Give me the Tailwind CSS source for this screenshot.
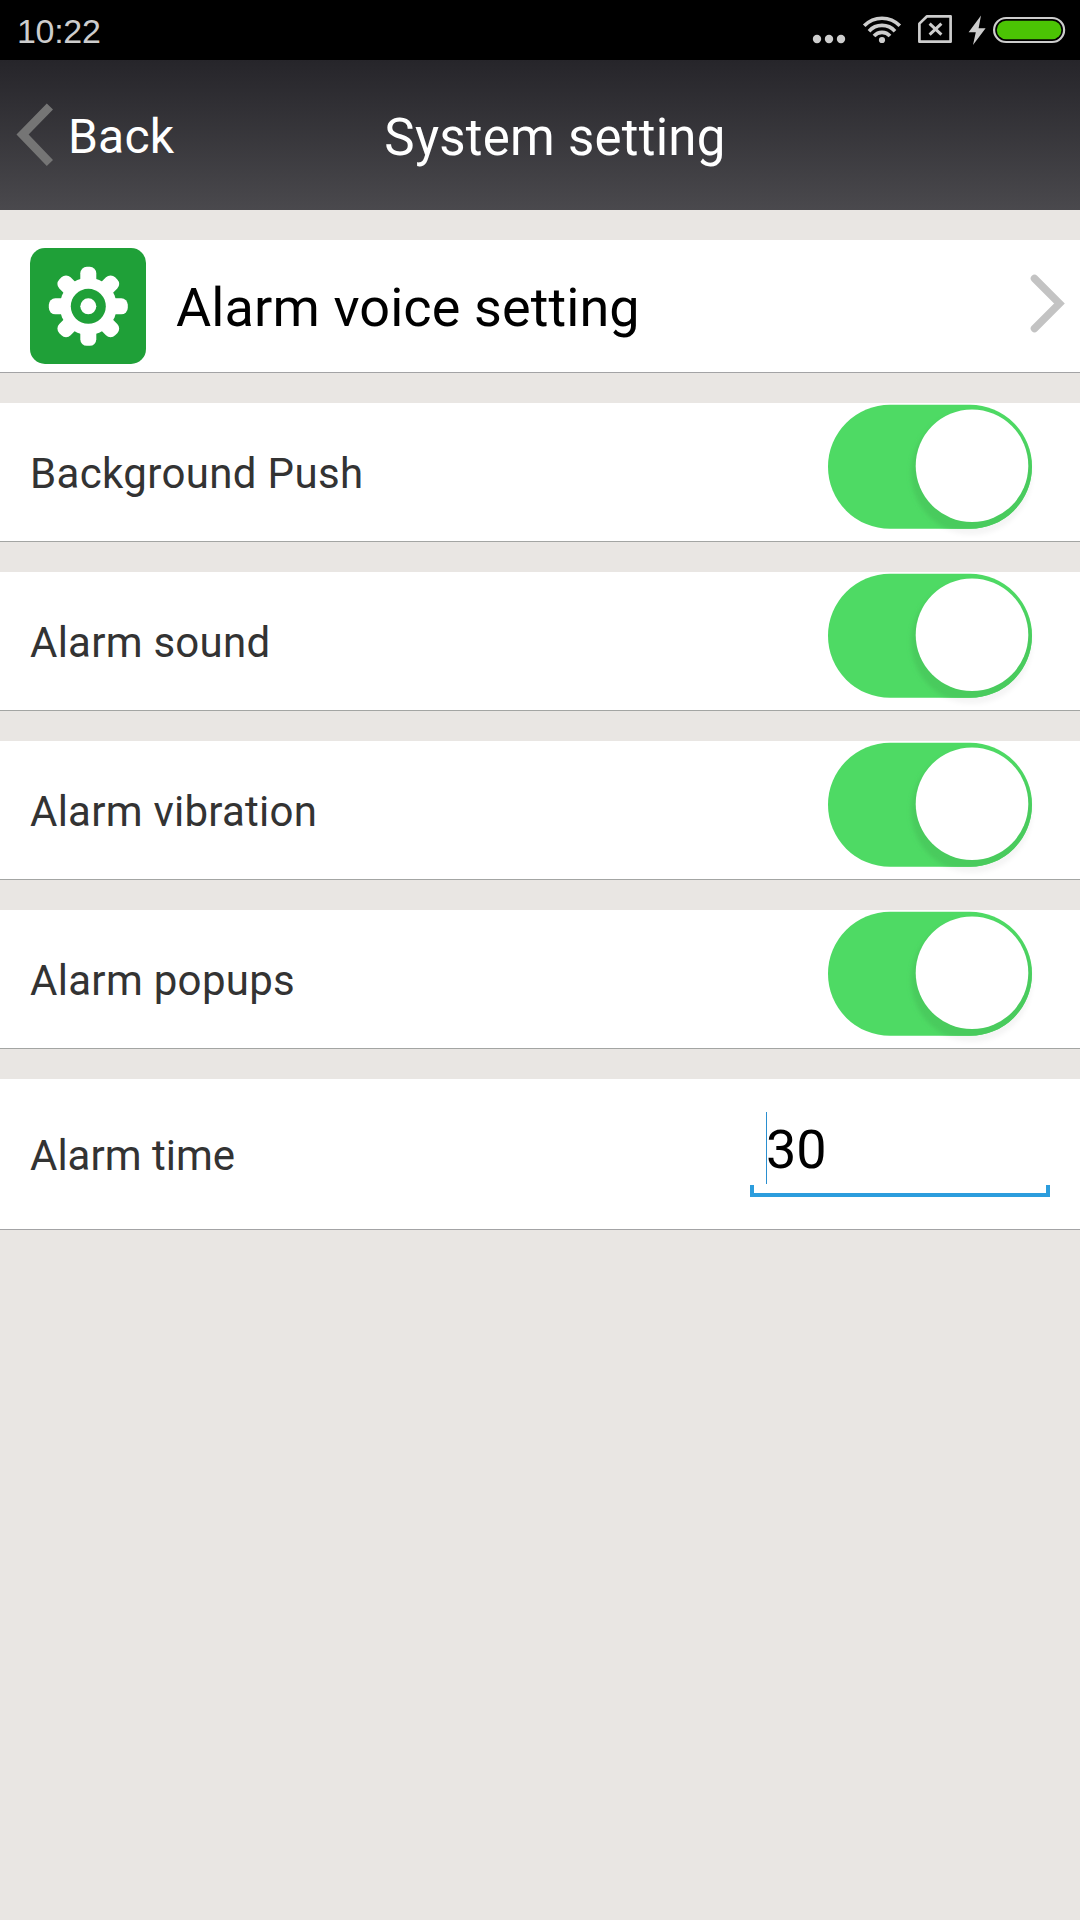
<!DOCTYPE html>
<html lang="en">
<head>
  <meta charset="UTF-8">
  <meta name="viewport" content="width=device-width, initial-scale=1.0">
  <title>System setting</title>
  <script src="https://cdn.jsdelivr.net/npm/@tailwindcss/browser@4"></script>
</head>
<body class="bg-[#e9e6e3] min-h-screen font-[Roboto,sans-serif] overflow-hidden">
  <!-- Status bar -->
  <div class="h-[60px] bg-black flex items-center justify-between pl-[17px] text-[#cdcdcd]">
    <span class="font-['Liberation_Sans',sans-serif] text-[34px] leading-none pt-px tracking-[-0.3px]">10:22</span>
    <div class="flex h-[60px]">
      <svg class="w-[36px] h-[60px]" viewBox="811 0 36 60" fill="currentColor">
        <circle cx="817" cy="39" r="4.2"/>
        <circle cx="829" cy="39" r="4.2"/>
        <circle cx="841" cy="39" r="4.2"/>
      </svg>
      <svg class="w-[70px] h-[60px]" viewBox="847 0 70 60" fill="none" stroke="currentColor" stroke-width="3.6">
        <path d="M864.2 25.8a24.6 24.6 0 0 1 35.6 0"/>
        <path d="M869 31.2a17.5 17.5 0 0 1 26 0"/>
        <path d="M874 36a10.6 10.6 0 0 1 16 0"/>
        <circle cx="882" cy="40" r="3.1" fill="currentColor" stroke="none"/>
      </svg>
      <svg class="w-[50px] h-[60px]" viewBox="917 0 50 60" fill="none" stroke="currentColor" stroke-width="2.7" stroke-linejoin="round">
        <path d="M927 16.3H950.6V41.7H919.4V23.6Z"/>
        <path d="M929.6 23.6L941.4 34.6M941.4 23.6L929.6 34.6" stroke-width="3"/>
      </svg>
      <svg class="w-[22px] h-[60px]" viewBox="967 0 22 60" fill="currentColor">
        <path d="M981 15.5L968.6 32.2H975.8L973 45L985.6 28.2H978.6Z"/>
      </svg>
      <svg class="w-[91px] h-[60px]" viewBox="989 0 91 60">
        <rect x="994.1" y="18" width="70" height="24" rx="12" fill="none" stroke="currentColor" stroke-width="2.2"/>
        <rect x="996.8" y="20.8" width="64.6" height="18.4" rx="9.2" fill="#4bc404"/>
      </svg>
    </div>
  </div>

  <!-- Header -->
  <header class="h-[150px] bg-linear-to-b from-[#26252a] to-[#4a494d] grid grid-cols-[1fr_auto_1fr] items-center text-white">
    <div class="flex items-center pl-4 gap-[14px]">
      <svg class="w-[38px] h-[64px]" viewBox="0 0 38 64" fill="#757575">
        <path d="M.5 31.5L30.8 .5L37 6.4L12.6 31.5L37 57L30.8 63Z"/>
      </svg>
      <span class="text-[48px] tracking-[0.2px] pt-1">Back</span>
    </div>
    <h1 class="text-[51px] tracking-[0.25px] pt-[6px] pl-[30px]">System setting</h1>
  </header>

  <main class="pt-[30px] flex flex-col gap-[30px] text-[42px] text-[#333]">
    <!-- Alarm voice -->
    <div class="h-[133px] bg-white border-b border-[#a3a3a5] flex items-center pl-[30px] pr-[14px] text-black">
      <svg class="w-[116px] h-[116px]" viewBox="0 0 116 116">
        <rect width="116" height="116" rx="15" fill="#1fa038"/>
        <g fill="#fff" transform="translate(58.3 58.3)">
          <circle r="28.5"/>
          <rect x="-8" y="-39.5" width="16" height="79" rx="6.5"/>
          <rect x="-8" y="-39.5" width="16" height="79" rx="6.5" transform="rotate(45)"/>
          <rect x="-8" y="-39.5" width="16" height="79" rx="6.5" transform="rotate(90)"/>
          <rect x="-8" y="-39.5" width="16" height="79" rx="6.5" transform="rotate(135)"/>
          <circle r="17.5" fill="#1fa038"/>
          <circle r="8"/>
        </g>
      </svg>
      <span class="text-[54px] tracking-[0.1px] pl-[30px] pt-[3px] flex-1">Alarm voice setting</span>
      <svg class="w-[36px] h-[60px] mb-[5px]" viewBox="0 0 36 60" fill="none" stroke="#c3c3c3" stroke-width="7.5" stroke-linecap="round">
        <path d="M4.5 4.5L29.5 29.5L4.5 54.5"/>
      </svg>
    </div>

    <!-- Switches -->
    <div class="h-[139px] bg-white border-b border-[#a3a5a3] flex items-center justify-between pl-[30px] pr-[40px]">
      <span class="tracking-[0.35px] pt-[3px]">Background Push</span>
      <svg class="w-[220px] h-[138px]" viewBox="820 0 220 138">
        <defs>
          <clipPath id="track"><rect x="828" y="1.8" width="204" height="124" rx="62"/></clipPath>
          <filter id="soft" x="-20%" y="-20%" width="140%" height="140%"><feGaussianBlur stdDeviation="2"/></filter>
          <g id="switch">
            <circle cx="972" cy="72" r="60" fill="#000" fill-opacity=".04" filter="url(#soft)"/>
            <rect x="828" y="1.8" width="204" height="124" rx="62" fill="#4eda64"/>
            <g clip-path="url(#track)">
              <circle cx="972" cy="70" r="61" fill="#48cb5d" filter="url(#soft)"/>
            </g>
            <circle cx="972" cy="62.7" r="56.3" fill="#fff"/>
          </g>
        </defs>
        <use href="#switch"/>
      </svg>
    </div>
    <div class="h-[139px] bg-white border-b border-[#a3a5a3] flex items-center justify-between pl-[30px] pr-[40px]">
      <span class="tracking-[0.25px] pt-[3px]">Alarm sound</span>
      <svg class="w-[220px] h-[138px]" viewBox="820 0 220 138"><use href="#switch"/></svg>
    </div>
    <div class="h-[139px] bg-white border-b border-[#a3a5a3] flex items-center justify-between pl-[30px] pr-[40px]">
      <span class="tracking-[0.25px] pt-[3px]">Alarm vibration</span>
      <svg class="w-[220px] h-[138px]" viewBox="820 0 220 138"><use href="#switch"/></svg>
    </div>
    <div class="h-[139px] bg-white border-b border-[#a3a5a3] flex items-center justify-between pl-[30px] pr-[40px]">
      <span class="tracking-[0.3px] pt-[3px]">Alarm popups</span>
      <svg class="w-[220px] h-[138px]" viewBox="820 0 220 138"><use href="#switch"/></svg>
    </div>

    <!-- Alarm time -->
    <div class="h-[151px] bg-white border-b border-[#a3a3a5] flex items-center justify-between px-[30px]">
      <span class="pt-[3px]">Alarm time</span>
      <div class="w-[300px]">
        <div class="flex items-center h-[74px] pl-4 text-black">
          <span class="w-px h-[72px] bg-[#2a8fd0]"></span>
          <span class="text-[54px] leading-[72px] pt-[3px] -ml-px">30</span>
        </div>
        <div class="h-3 border-4 border-t-0 border-[#2c9ddd]"></div>
      </div>
    </div>
  </main>
</body>
</html>
